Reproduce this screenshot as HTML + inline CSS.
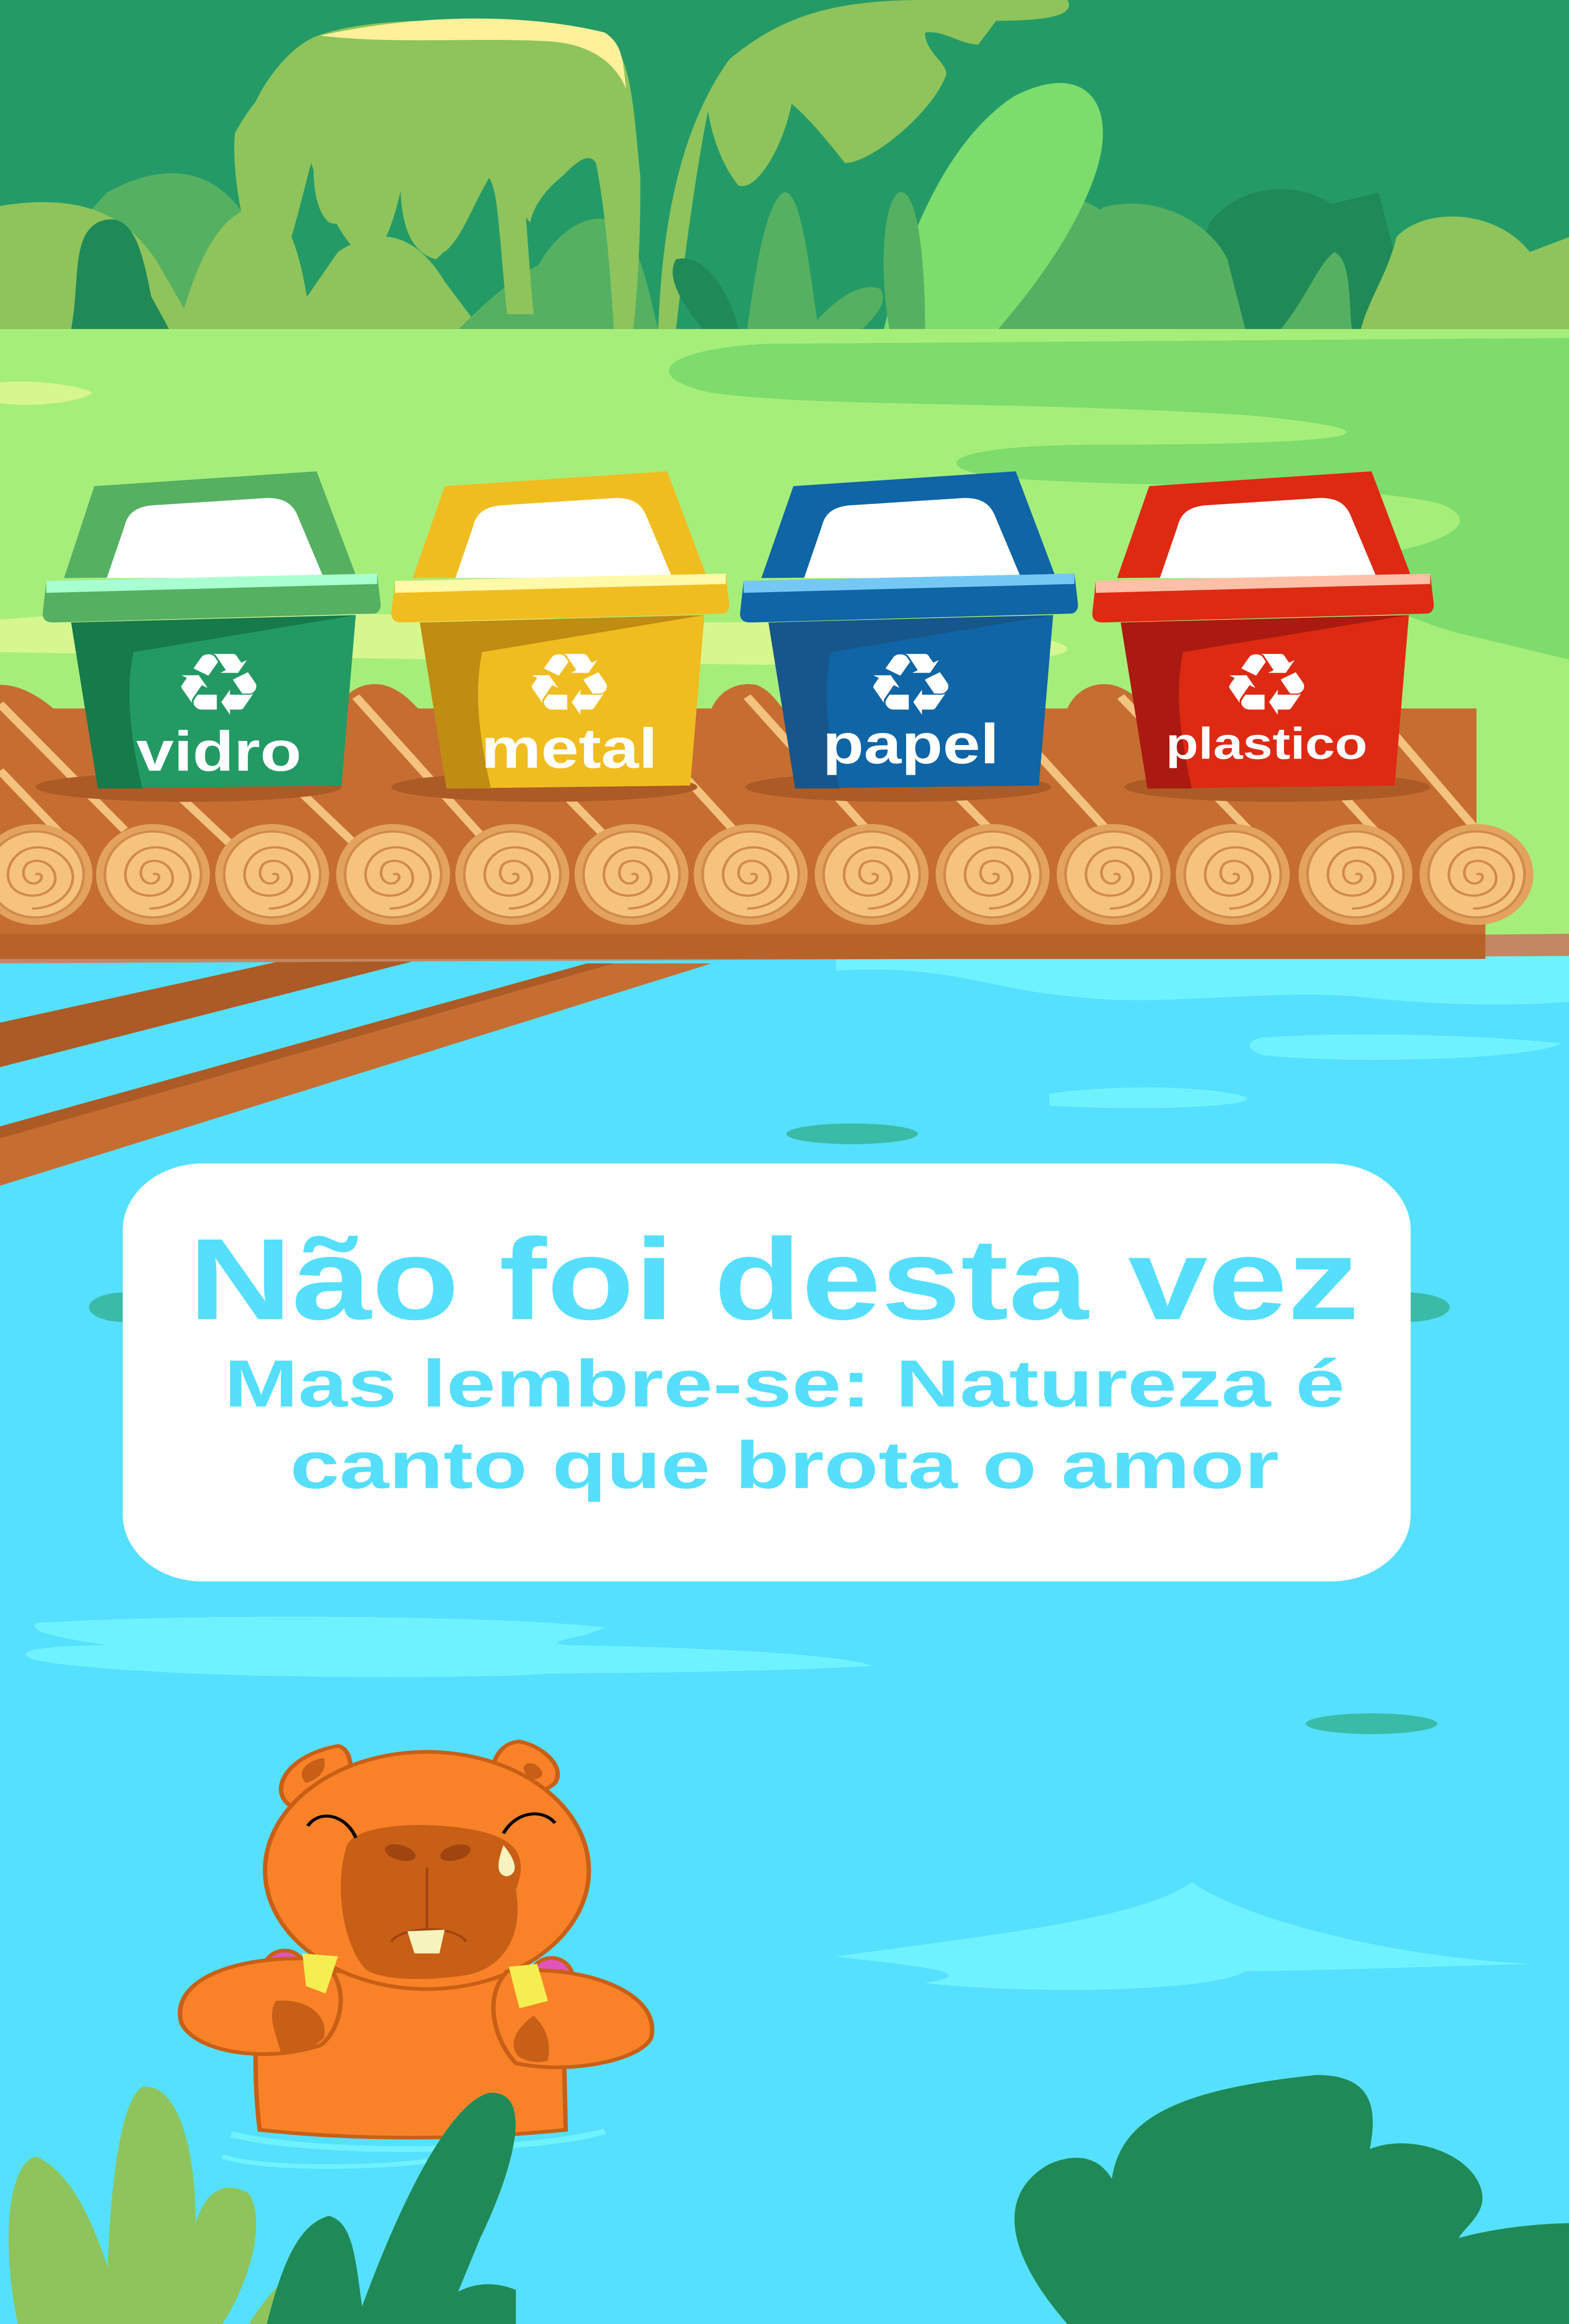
<!DOCTYPE html>
<html><head><meta charset="utf-8"><style>
html,body{margin:0;padding:0;width:100%;height:100%;overflow:hidden;background:#56E0FF}
svg{display:block;width:100vw;height:100vh;position:absolute;left:0;top:0}
</style></head><body>
<svg viewBox="0 0 882 1568" preserveAspectRatio="none" xmlns="http://www.w3.org/2000/svg" font-family="'Liberation Sans', sans-serif">
<defs>
<g id="log">
<ellipse cx="0" cy="0" rx="32" ry="34" fill="#E3A35F"/>
<ellipse cx="0" cy="0" rx="27" ry="29" fill="#F6C37F" stroke="#D18A4A" stroke-width="1.5"/>
<path d="M0,0 C4,-2 5,4 0,6 C-6,7 -9,-1 -5,-7 C2,-13 12,-6 11,4 C10,13 -2,18 -11,11 C-19,4 -16,-12 -5,-17 C7,-22 20,-12 21,1 C21,14 10,23 -2,23" stroke="#D18A4A" stroke-width="1.5" fill="none"/>
</g>
</defs>
<!-- jungle -->
<rect x="0" y="0" width="882" height="225" fill="#249B67"/>
<path d="M20,222 C25,180 30,170 45,150 L60,130 C90,110 120,110 140,150 L160,200 L180,222Z" fill="#55B062"/>
<path d="M520,222 L560,150 C590,120 620,130 640,170 L660,222Z" fill="#55B062"/>
<path d="M660,222 L680,150 C700,120 740,120 760,150 L790,222Z" fill="#1F8A57"/>
<path d="M-5,222 L-5,140 C40,130 70,140 90,180 L110,222Z" fill="#8EC45B"/>
<path d="M40,222 C45,190 40,160 55,150 C75,140 80,170 85,200 L95,222Z" fill="#1F8A57"/>
<path d="M100,222 C110,180 120,150 140,140 C160,130 170,170 175,222Z" fill="#8EC45B"/>
<path d="M160,222 L190,170 C215,150 235,160 250,190 L270,222Z" fill="#8EC45B"/>
<path d="M258,222 C300,170 330,160 345,180 C360,200 355,222 355,222Z" fill="#55B062"/>
<path d="M290,222 C300,160 330,140 345,150 C360,160 365,200 370,222Z" fill="#55B062"/>
<path d="M72,100 C90,60 120,35 165,30 C200,25 215,40 225,70 C235,110 235,160 240,222 L225,222 C220,160 220,140 215,130 C205,150 200,170 190,180 C180,170 175,130 172,100 C165,140 160,180 145,185 C130,170 120,140 115,120 C110,140 100,200 90,200 C78,180 70,130 72,100Z" fill="#8EC45B" transform="translate(60,-10)"/>
<path d="M175,26 C200,12 260,10 330,20 C355,25 355,60 360,120 C360,170 358,200 356,222 L345,222 C343,180 340,140 335,110 C330,100 320,115 315,120 C305,130 300,140 298,150 C290,140 283,120 280,100 C270,130 260,160 245,175 C230,170 225,150 225,120 C210,140 195,155 185,150 C175,140 175,110 178,90 C170,100 160,110 150,108 C140,100 138,90 140,80 C145,60 160,35 175,26Z" fill="#8EC45B"/>
<path d="M180,24 C240,8 300,10 340,22 C350,30 350,40 352,60 C345,40 330,30 310,28 C270,25 220,30 180,24Z" fill="#FFF09A"/>
<path d="M370,222 C372,160 380,90 410,40 C440,10 470,0 520,0 L600,0 C605,10 590,14 560,14 L550,30 C540,30 530,20 520,22 C520,35 532,42 532,50 C525,75 490,110 475,110 C465,95 455,80 445,70 C440,100 425,130 415,125 C405,110 400,90 398,75 C392,110 385,170 380,222Z" fill="#8EC45B"/>
<path d="M480,222 C490,150 515,60 560,25 C600,0 620,30 605,80 C590,130 555,180 520,222Z" fill="#7CDC6C" transform="translate(10,40)"/>
<path d="M420,222 C425,180 430,140 440,130 C450,125 455,180 460,222Z" fill="#55B062"/>
<path d="M455,222 C470,200 485,190 495,195 C500,205 490,215 485,222Z" fill="#55B062"/>
<path d="M500,222 C495,190 495,140 505,130 C515,125 520,170 520,222Z" fill="#55B062"/>
<path d="M395,222 C380,200 375,185 380,175 C395,170 410,195 415,222Z" fill="#1F8A57"/>
<path d="M600,222 C600,180 600,160 620,140 C650,130 680,150 690,175 L700,222Z" fill="#55B062"/>
<path d="M735,222 L740,140 L775,130 L795,222Z" fill="#1F8A57"/>
<path d="M765,222 C770,200 780,185 785,160 C800,140 840,140 860,170 L882,160 L882,222Z" fill="#8EC45B"/>
<path d="M720,222 C735,200 740,180 750,170 C760,175 758,205 760,222Z" fill="#55B062"/>
<!-- grass -->
<rect x="0" y="222" width="882" height="440" fill="#A6EE7A"/>
<path d="M882,228 L430,232 C370,236 360,255 400,265 C460,275 560,270 700,280 C790,290 780,300 620,300 C530,300 520,315 560,322 C640,330 760,325 810,340 C840,355 800,370 770,375 C740,390 790,420 830,430 L882,445Z" fill="#7EDC6C"/>
<path d="M0,418 C60,412 130,410 200,414 L400,420 C520,418 600,428 600,438 C600,448 500,450 400,448 L0,440Z" fill="#D6F78E"/>
<path d="M0,258 C20,256 45,260 52,265 C45,272 15,275 0,272Z" fill="#D6F78E"/>
<!-- water -->
<rect x="0" y="640" width="882" height="928" fill="#56E0FF"/>
<path d="M470,655 C530,650 560,668 600,672 C650,680 700,668 760,672 C820,680 860,678 882,676 L882,640 L470,640Z" fill="#6FF2FF"/>
<path d="M710,700 C760,696 830,698 878,704 C860,715 760,718 710,712 C700,708 700,702 710,700Z" fill="#6FF2FF"/>
<path d="M590,738 C620,732 680,732 700,740 C710,746 650,750 590,746Z" fill="#6FF2FF"/>
<path d="M20,1095 C120,1088 280,1090 340,1098 C330,1105 300,1108 320,1110 C420,1112 480,1118 490,1124 C400,1130 300,1128 300,1130 C200,1134 60,1130 20,1120 C0,1112 40,1110 60,1110 C40,1106 15,1102 20,1095Z" fill="#6FF2FF"/>
<path d="M470,1320 C560,1305 640,1295 670,1270 C700,1295 780,1320 860,1325 C780,1328 720,1330 700,1330 C680,1345 570,1345 520,1338 C560,1330 500,1325 470,1320Z" fill="#6FF2FF"/>
<ellipse cx="479" cy="765" rx="37" ry="7" fill="#3ABBA8"/>
<ellipse cx="771" cy="1163" rx="37" ry="7" fill="#3ABBA8"/>
<ellipse cx="790" cy="882" rx="25" ry="10" fill="#3ABBA8"/>
<ellipse cx="70" cy="882" rx="20" ry="10" fill="#3ABBA8"/>
<!-- raft underside beams -->
<path d="M0,690 L190,640 L260,640 L0,720Z" fill="#AC5A26"/>
<path d="M0,760 L330,650 L400,650 L0,800Z" fill="#C66D31"/>
<path d="M0,760 L330,650 L345,650 L0,768Z" fill="#AC5A26"/>
<path d="M0,640 L882,630 L882,645 L0,650Z" fill="#C48763"/>
<!-- planks -->
<path d="M0,462 C10,462 20,468 30,478 L190,478 C195,465 205,460 215,462 C225,465 230,472 235,478 L400,478 C405,465 415,460 425,462 C432,465 436,472 440,478 L600,478 C605,465 615,460 625,462 C635,465 640,472 645,478 L830,478 L830,620 L0,620Z" fill="#C66D31"/>
<g stroke="#F4C27F" stroke-width="5">
<path d="M0,475 L70,560"/><path d="M0,520 L40,570"/>
<path d="M50,480 L130,570"/><path d="M120,478 L200,570"/>
<path d="M200,470 L275,570"/><path d="M270,478 L345,570"/>
<path d="M350,478 L420,570"/><path d="M420,470 L495,570"/>
<path d="M490,478 L565,570"/><path d="M560,478 L630,570"/>
<path d="M630,470 L710,570"/><path d="M710,478 L780,570"/>
<path d="M780,490 L830,560"/>
</g>
<rect x="0" y="605" width="835" height="42" rx="10" fill="#C66D31"/>
<rect x="0" y="630" width="835" height="17" fill="#B86229"/>
<!-- logs -->
<use href="#log" x="20" y="590"/><use href="#log" x="86" y="590"/><use href="#log" x="153" y="590"/><use href="#log" x="221" y="590"/><use href="#log" x="288" y="590"/><use href="#log" x="355" y="590"/><use href="#log" x="422" y="590"/><use href="#log" x="490" y="590"/><use href="#log" x="558" y="590"/><use href="#log" x="626" y="590"/><use href="#log" x="693" y="590"/><use href="#log" x="762" y="590"/><use href="#log" x="830" y="590"/>
<!-- bin shadows -->
<ellipse cx="106" cy="531" rx="86" ry="10" fill="#AC5A26"/>
<ellipse cx="306" cy="531" rx="86" ry="10" fill="#AC5A26"/>
<ellipse cx="505" cy="531" rx="86" ry="10" fill="#AC5A26"/>
<ellipse cx="718" cy="531" rx="86" ry="10" fill="#AC5A26"/>
<!-- bin 1 -->
<g>
<path d="M36,390 L53,328 L178,318 L200,388Z" fill="#55B062"/>
<path d="M60,390 L70,355 C72,345 78,342 85,341 L150,336 C160,336 165,340 168,350 L182,390Z" fill="#fff"/>
<path d="M26,392 L212,387 L214,408 C214,412 212,414 210,414 L30,420 C26,420 24,418 24,414Z" fill="#55B062"/>
<path d="M26,392 L212,387 L212,394 L26,400Z" fill="#A8FFD0"/>
<path d="M40,420 L200,415 L192,530 L55,532Z" fill="#239A64"/>
<path d="M40,420 L200,415 L75,440 C70,470 74,500 80,532 L55,532Z" fill="#167A4A"/>
<text x="123" y="482" font-size="58" fill="#fff" text-anchor="middle">♻</text>
<text x="123" y="520" font-size="38" font-weight="bold" fill="#fff" text-anchor="middle">vidro</text>
</g>
<g>
<path d="M232,390 L250,328 L375,318 L397,388Z" fill="#F0BD20"/>
<path d="M256,390 L266,355 C268,345 274,342 281,341 L346,336 C356,336 361,340 364,350 L378,390Z" fill="#fff"/>
<path d="M222,392 L408,387 L410,408 C410,412 408,414 406,414 L226,420 C222,420 220,418 220,414Z" fill="#F0BD20"/>
<path d="M222,392 L408,387 L408,394 L222,400Z" fill="#FFF9A8"/>
<path d="M236,420 L396,415 L388,530 L251,532Z" fill="#F0BD20"/>
<path d="M236,420 L396,415 L271,440 C266,470 270,500 276,532 L251,532Z" fill="#C08C12"/>
<text x="320" y="482" font-size="58" fill="#fff" text-anchor="middle">♻</text>
<text x="320" y="518" font-size="38" font-weight="bold" fill="#fff" text-anchor="middle">metal</text>
</g>
<g>
<path d="M428,390 L446,328 L571,318 L593,388Z" fill="#0F65A5"/>
<path d="M452,390 L462,355 C464,345 470,342 477,341 L542,336 C552,336 557,340 560,350 L574,390Z" fill="#fff"/>
<path d="M418,392 L604,387 L606,408 C606,412 604,414 602,414 L422,420 C418,420 416,418 416,414Z" fill="#0F65A5"/>
<path d="M418,392 L604,387 L604,394 L418,400Z" fill="#76C8F4"/>
<path d="M432,420 L592,415 L584,530 L447,532Z" fill="#0F65A5"/>
<path d="M432,420 L592,415 L467,440 C462,470 466,500 472,532 L447,532Z" fill="#17568A"/>
<text x="512" y="482" font-size="58" fill="#fff" text-anchor="middle">♻</text>
<text x="512" y="515" font-size="38" font-weight="bold" fill="#fff" text-anchor="middle">papel</text>
</g>
<g>
<path d="M628,390 L646,328 L771,318 L793,388Z" fill="#DE2A13"/>
<path d="M652,390 L662,355 C664,345 670,342 677,341 L742,336 C752,336 757,340 760,350 L774,390Z" fill="#fff"/>
<path d="M616,392 L804,387 L806,408 C806,412 804,414 802,414 L620,420 C616,420 614,418 614,414Z" fill="#DE2A13"/>
<path d="M616,392 L804,387 L804,394 L616,400Z" fill="#FFC0A8"/>
<path d="M630,420 L792,415 L784,530 L645,532Z" fill="#DE2A13"/>
<path d="M630,420 L792,415 L665,440 C660,470 664,500 670,532 L645,532Z" fill="#AA1A10"/>
<text x="712" y="482" font-size="58" fill="#fff" text-anchor="middle">♻</text>
<text x="712" y="512" font-size="30" font-weight="bold" fill="#fff" text-anchor="middle">plastico</text>
</g>
<!-- card -->
<rect x="69" y="785" width="724" height="282" rx="45" fill="#fff"/>
<text x="435" y="890" font-size="78" font-weight="bold" fill="#55DFFD" text-anchor="middle" textLength="658" lengthAdjust="spacingAndGlyphs">Não foi desta vez</text>
<text x="441" y="949" font-size="45" font-weight="bold" fill="#55DFFD" text-anchor="middle" textLength="630" lengthAdjust="spacingAndGlyphs">Mas lembre-se: Natureza é</text>
<text x="441" y="1004" font-size="45" font-weight="bold" fill="#55DFFD" text-anchor="middle" textLength="556" lengthAdjust="spacingAndGlyphs">canto que brota o amor</text>
<!-- capybara -->
<g stroke="#C85F16" stroke-width="2.5">
<ellipse cx="160" cy="1330" rx="12" ry="14" fill="#E055B8"/>
<ellipse cx="310" cy="1335" rx="12" ry="14" fill="#E055B8"/>
<path d="M146,1330 L316,1330 L318,1437 C260,1444 200,1444 146,1437 C142,1400 144,1360 146,1330Z" fill="#F98228"/>
<path d="M166,1220 C150,1212 158,1185 190,1178 C198,1180 198,1195 196,1205Z" fill="#F98228"/>
<path d="M276,1202 C276,1190 280,1176 292,1175 C305,1178 318,1192 312,1203 C305,1210 296,1212 290,1213Z" fill="#F98228"/>
<ellipse cx="240" cy="1262" rx="91" ry="80" fill="#F98228"/>
<path d="M102,1365 C95,1335 135,1318 180,1322 C200,1340 190,1372 180,1380 C150,1392 110,1385 102,1365Z" fill="#F98228"/>
<path d="M366,1375 C372,1345 330,1325 285,1330 C270,1350 280,1380 290,1392 C320,1400 360,1390 366,1375Z" fill="#F98228"/>
</g>
<path d="M170,1318 L190,1320 L183,1345 L172,1340Z" fill="#F5EE50"/>
<path d="M286,1327 L302,1325 L308,1350 L292,1355Z" fill="#F5EE50"/>
<path d="M195,1245 C200,1232 230,1230 250,1232 C290,1236 298,1250 290,1275 C295,1310 280,1330 260,1333 C230,1338 210,1334 205,1328 C192,1310 188,1270 195,1245Z" fill="#C85F16"/>
<ellipse cx="225" cy="1250" rx="9" ry="5" transform="rotate(20 225 1250)" fill="#A04510"/>
<ellipse cx="256" cy="1250" rx="9" ry="5" transform="rotate(-20 256 1250)" fill="#A04510"/>
<path d="M240,1260 L240,1302 M220,1310 C225,1300 255,1298 262,1310" stroke="#A04510" stroke-width="1.5" fill="none"/>
<path d="M229,1303 L250,1302 L247,1318 L233,1318Z" fill="#F7F3BE"/>
<path d="M173,1232 C180,1220 195,1225 200,1240 M283,1237 C290,1222 305,1220 312,1230" stroke="#000" stroke-width="2" fill="none"/>
<path d="M283,1245 C280,1255 278,1265 285,1266 C292,1264 290,1255 283,1245Z" fill="#F7F3BE"/>
<path d="M172,1203 C166,1196 172,1188 182,1186 C184,1194 180,1200 172,1203Z" fill="#C85F16"/>
<path d="M300,1190 C308,1195 305,1202 298,1200 C293,1195 293,1188 300,1190Z" fill="#C85F16"/>
<path d="M155,1350 C175,1348 185,1362 182,1375 C175,1384 162,1385 158,1385 C155,1372 150,1360 155,1350Z" fill="#C85F16"/>
<path d="M300,1360 C290,1368 285,1380 292,1388 C298,1392 305,1392 308,1390 C310,1378 307,1368 300,1360Z" fill="#C85F16"/>
<path d="M130,1440 C180,1455 300,1452 340,1438" stroke="#6FF2FF" stroke-width="4" fill="none"/>
<path d="M125,1455 C150,1465 220,1462 240,1458" stroke="#6FF2FF" stroke-width="3" fill="none"/>
<!-- bottom plants -->
<path d="M10,1568 C0,1510 5,1460 20,1455 C40,1465 55,1500 70,1568Z" fill="#8EC45B"/>
<path d="M60,1568 C60,1500 65,1420 80,1408 C100,1405 110,1450 110,1500 C115,1480 125,1470 140,1480 C150,1500 140,1540 125,1568Z" fill="#8EC45B"/>
<path d="M140,1568 C150,1548 170,1520 190,1520 C200,1530 185,1560 180,1568Z" fill="#8EC45B"/>
<path d="M150,1568 C160,1520 170,1500 185,1495 C200,1500 200,1530 205,1568Z" fill="#1F8A57"/>
<path d="M200,1568 C220,1500 250,1420 275,1412 C300,1410 290,1460 270,1510 L250,1568Z" fill="#1F8A57"/>
<path d="M240,1568 C250,1545 270,1535 290,1545 L290,1568Z" fill="#1F8A57"/>
<path d="M600,1568 C565,1520 560,1480 590,1460 C610,1450 620,1460 625,1470 C630,1430 660,1410 740,1400 C770,1400 775,1420 770,1450 C790,1440 820,1450 830,1470 C840,1490 825,1500 820,1510 C850,1500 882,1500 882,1500 L882,1568Z" fill="#1F8A57"/>
</svg>
</body></html>
